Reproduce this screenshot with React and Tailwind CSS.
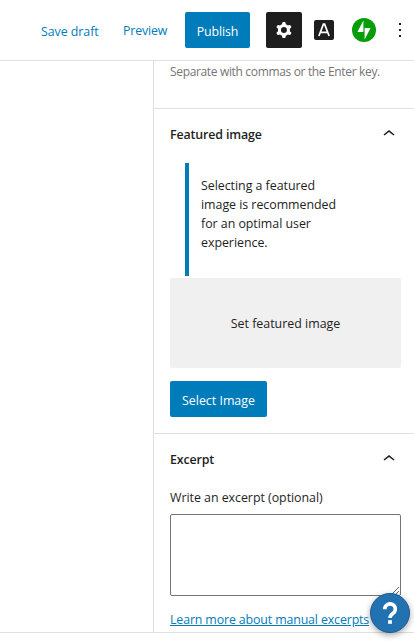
function ChevronUp() {
  return (
    <svg viewBox="0 0 24 24" className="size-6 fill-[#1e1e1e]">
      <path d="M6.5 12.4L12 8l5.5 4.4-.9 1.2L12 10l-4.5 3.6-1-1.2z" />
    </svg>
  );
}

function PanelTitle({ children }) {
  return (
    <button className="flex h-12 w-full items-center justify-between pl-4 pr-[13px]">
      <span className="pt-0.5 font-semibold tracking-[-0.13px]">{children}</span>
      <span className="pt-px">
        <ChevronUp />
      </span>
    </button>
  );
}

function Header() {
  return (
    <header className="flex h-[61px] shrink-0 items-center border-b border-[#e0e0e0] text-[#007cba]">
      <button className="ml-[41px] w-[58px] whitespace-nowrap pt-0.5 text-left tracking-[-0.05px]">Save draft</button>
      <button className="ml-6 w-[45px] whitespace-nowrap text-left tracking-[-0.15px]">Preview</button>
      <button className="ml-[17px] h-9 w-[65px] rounded-[2px] bg-[#007cba] pt-0.5 tracking-[-0.1px] text-white">Publish</button>
      <button className="ml-4 flex size-9 items-center justify-center rounded-[2px] bg-[#1e1e1e]">
        <svg viewBox="0 0 24 24" className="size-6 fill-white">
          <path
            fillRule="evenodd"
            clipRule="evenodd"
            d="M10.289 4.836A1 1 0 0111.275 4h1.306a1 1 0 01.987.836l.244 1.466c.787.26 1.503.679 2.108 1.218l1.393-.522a1 1 0 011.216.437l.653 1.13a1 1 0 01-.23 1.273l-1.148.944a6.025 6.025 0 010 2.435l1.149.946a1 1 0 01.23 1.272l-.653 1.13a1 1 0 01-1.216.437l-1.394-.522c-.605.54-1.32.958-2.108 1.218l-.244 1.466a1 1 0 01-.987.836h-1.306a1 1 0 01-.986-.836l-.244-1.466a5.995 5.995 0 01-2.108-1.218l-1.394.522a1 1 0 01-1.217-.436l-.653-1.131a1 1 0 01.23-1.272l1.149-.946a6.026 6.026 0 010-2.435l-1.148-.944a1 1 0 01-.23-1.272l.653-1.131a1 1 0 011.217-.437l1.393.522a5.994 5.994 0 012.108-1.218l.244-1.466zM14.929 12a3 3 0 11-6 0 3 3 0 016 0z"
          />
        </svg>
      </button>
      <button className="ml-3 flex size-5 items-center justify-center rounded-[2px] bg-[#1e1e1e]">
        <svg viewBox="0 0 20 20" className="size-5" fill="none" stroke="white" strokeWidth="1.7">
          <path d="M4.9 16L9.4 4.2h1.2L15.1 16M6.4 12.3h7.2" />
        </svg>
      </button>
      <button className="ml-[18px]">
        <svg viewBox="0 0 32 32" className="size-6">
          <circle cx="16" cy="16" r="16" fill="#069e08" />
          <path fill="white" d="M15.2 18.7h-8l8-15.5v15.5zM16.8 28.8V13.3h8l-8 15.5z" />
        </svg>
      </button>
      <button className="ml-3">
        <svg viewBox="0 0 24 24" className="size-6 fill-[#1e1e1e]">
          <path d="M13 19h-2v-2h2v2zm0-6h-2v-2h2v2zm0-6h-2V5h2v2z" />
        </svg>
      </button>
    </header>
  );
}

export default function App() {
  return (
    <div className="relative flex h-[643px] w-[414px] flex-col overflow-hidden bg-white font-['Open_Sans','Noto_Sans',sans-serif] text-[12.4px] leading-[19px] text-[#1e1e1e]">
      <Header />
      <main className="flex h-[572px] shrink-0 border-b border-[#e0e0e0]">
        <div className="w-[153px] shrink-0" />
        <aside className="flex-1 border-l border-[#e0e0e0]">
          <p className="h-[47px] whitespace-nowrap pl-4 pt-px text-[12px] tracking-[-0.34px] text-[#757575]">
            <span>Separate with commas or the Enter key.</span>
          </p>
          <section className="h-[325px] border-t border-[#e0e0e0]">
            <PanelTitle>Featured image</PanelTitle>
            <div className="ml-[31px] mt-1.5 h-[113px] w-[180px] border-l-4 border-[#007cba] pl-3 pt-[13px]">
              <p className="tracking-[-0.03px]">
                <span>Selecting a featured</span>
                <br />
                <span>image is recommended</span>
                <br />
                <span>for an optimal user</span>
                <br />
                <span>experience.</span>
              </p>
            </div>
            <button className="ml-4 mt-0.5 block h-[90px] w-[231px] rounded-[2px] bg-[#f0f0f0]">
              Set featured image
            </button>
            <button className="ml-4 mt-[13px] block h-9 w-[97px] rounded-[2px] bg-[#007cba] pt-0.5 text-white">
              Select Image
            </button>
          </section>
          <section className="border-t border-[#e0e0e0]">
            <PanelTitle>Excerpt</PanelTitle>
            <div className="flex flex-col items-start pl-4 pt-1.5">
              <label htmlFor="excerpt" className="whitespace-nowrap tracking-[-0.03px]">
                Write an excerpt (optional)
              </label>
              <textarea
                id="excerpt"
                className="mt-[7px] h-[82px] w-[231px] rounded-[2px] border border-[#757575] bg-white"
              />
              <a className="mt-3.5 whitespace-nowrap tracking-[-0.14px] text-[#007cba] underline underline-offset-1">
                Learn more about manual excerpts
              </a>
            </div>
          </section>
        </aside>
      </main>
      <button className="absolute left-[370px] top-[593px] flex size-10 items-center justify-center rounded-full border border-[#1c5c91] bg-[#2271b1] shadow-[0_2px_6px_rgba(0,0,0,0.35)]">
        <svg viewBox="0 0 40 40" className="size-10 shrink-0" fill="none" stroke="white" strokeWidth="3.6">
          <path d="M14.7 16.2a5.3 5.2 0 1 1 8.4 4.1c-1.9 1.4-3.1 2.4-3.1 4.7" />
          <path d="M18.1 29h3.8" />
        </svg>
      </button>
    </div>
  );
}
